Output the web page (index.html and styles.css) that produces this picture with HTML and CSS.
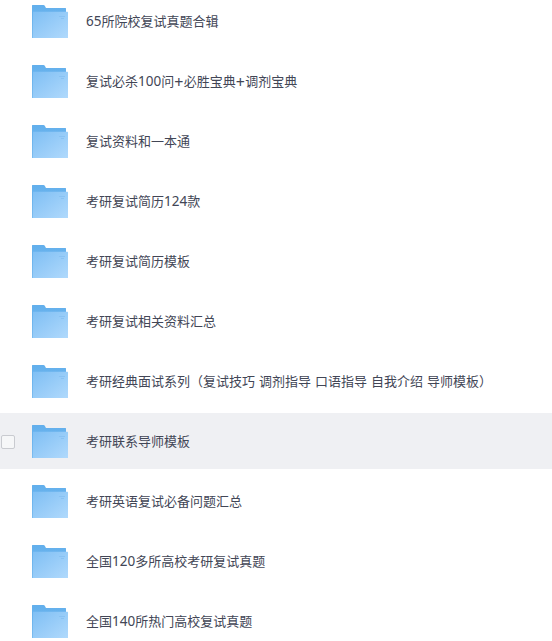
FILE: index.html
```html
<!DOCTYPE html>
<html lang="zh-CN">
<head>
  <meta charset="utf-8">
  <meta name="viewport" content="width=device-width, initial-scale=1.0">
  <title>考研复试资料</title>
  <link rel="stylesheet" href="styles.css">
</head>
<body>

  <!-- shared folder icon -->
  <svg class="defs" width="0" height="0">
    <defs>
      <linearGradient id="back" x1="0" y1="0" x2="0" y2="1">
        <stop offset="0" stop-color="#62afec"/>
        <stop offset="1" stop-color="#7cbcf0"/>
      </linearGradient>
      <linearGradient id="front" x1="0" y1="0" x2="1" y2="1">
        <stop offset="0" stop-color="#7fbff4"/>
        <stop offset="1" stop-color="#b0d9fc"/>
      </linearGradient>
      <symbol id="folder" viewBox="0 0 36 33">
        <path fill="url(#back)" d="M0 .5Q0 0 .5 0H11.5Q12.4 0 12.9 1L14 3H33.5Q34 3 34 3.5V33H0Z"/>
        <path fill="url(#front)" d="M1 6.7H35.5Q36 6.7 36 7.2V32.5Q36 33 35.5 33H1Z"/>
        <path fill="none" stroke="#85bff1" stroke-width=".8" d="M27 11.5H33M29 13.5H32"/>
      </symbol>
    </defs>
  </svg>

  <ul class="file-list">
    <li class="file-row">
      <span class="checkbox"></span>
      <svg class="icon"><use href="#folder"/></svg>
      <span class="name"><span class="num">65</span>所院校复试真题合辑</span>
    </li>
    <li class="file-row">
      <span class="checkbox"></span>
      <svg class="icon"><use href="#folder"/></svg>
      <span class="name">复试必杀<span class="num">100</span>问<span class="plus">+</span>必胜宝典<span class="plus">+</span>调剂宝典</span>
    </li>
    <li class="file-row">
      <span class="checkbox"></span>
      <svg class="icon"><use href="#folder"/></svg>
      <span class="name">复试资料和一本通</span>
    </li>
    <li class="file-row">
      <span class="checkbox"></span>
      <svg class="icon"><use href="#folder"/></svg>
      <span class="name">考研复试简历<span class="num">124</span>款</span>
    </li>
    <li class="file-row">
      <span class="checkbox"></span>
      <svg class="icon"><use href="#folder"/></svg>
      <span class="name">考研复试简历模板</span>
    </li>
    <li class="file-row">
      <span class="checkbox"></span>
      <svg class="icon"><use href="#folder"/></svg>
      <span class="name">考研复试相关资料汇总</span>
    </li>
    <li class="file-row">
      <span class="checkbox"></span>
      <svg class="icon"><use href="#folder"/></svg>
      <span class="name">考研经典面试系列（复试技巧 调剂指导 口语指导 自我介绍 导师模板）</span>
    </li>
    <li class="file-row active">
      <span class="checkbox"></span>
      <svg class="icon"><use href="#folder"/></svg>
      <span class="name">考研联系导师模板</span>
    </li>
    <li class="file-row">
      <span class="checkbox"></span>
      <svg class="icon"><use href="#folder"/></svg>
      <span class="name">考研英语复试必备问题汇总</span>
    </li>
    <li class="file-row">
      <span class="checkbox"></span>
      <svg class="icon"><use href="#folder"/></svg>
      <span class="name">全国<span class="num">120</span>多所高校考研复试真题</span>
    </li>
    <li class="file-row">
      <span class="checkbox"></span>
      <svg class="icon"><use href="#folder"/></svg>
      <span class="name">全国<span class="num">140</span>所热门高校复试真题</span>
    </li>
  </ul>

</body>
</html>
```

FILE: styles.css
```css
body {
  margin: 0;
  height: 641px;
  overflow: hidden;
  background-color: #fff;
  color: #424656;
  font-family: "Noto Sans", "Noto Sans CJK SC", sans-serif;
  font-size: 13px;
}
.defs {
  display: block;
}
.file-list {
  display: flex;
  flex-direction: column;
  gap: 4px;
  margin: -7px 0 0;
  padding: 0;
  list-style: none;
}
.file-row {
  display: flex;
  align-items: center;
  height: 56px;
  padding-left: 1px;
}
.file-row.active {
  background-color: #eff0f3;
}
.checkbox {
  box-sizing: border-box;
  width: 14px;
  height: 14px;
  margin-top: 2px;
  border: 1px solid #c9cbd0;
  border-radius: 2px;
  background-color: #f6f7f8;
  visibility: hidden;
}
.active .checkbox {
  visibility: visible;
}
.icon {
  width: 36px;
  height: 33px;
  margin: 1px 18px 0 17px;
}
.name {
  line-height: 20px;
  white-space: nowrap;
  word-spacing: .6px;
}
.num {
  font-size: 13.5px;
  line-height: 1;
}
.plus {
  font-size: 16px;
  line-height: 1;
  letter-spacing: .3px;
  vertical-align: -2px;
}
```
